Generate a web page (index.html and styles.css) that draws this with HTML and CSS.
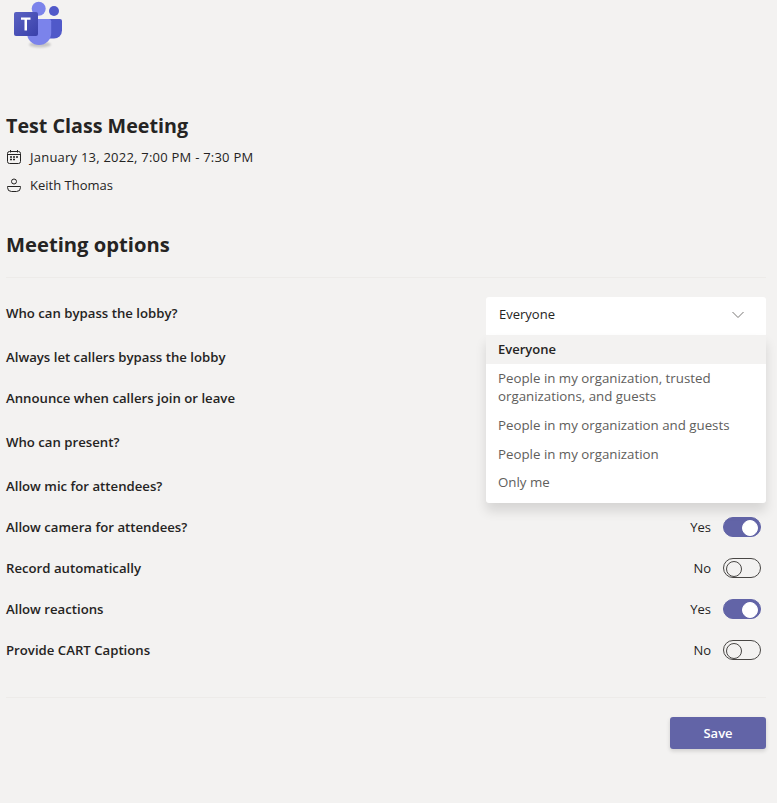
FILE: index.html
```html
<!DOCTYPE html>
<html lang="en">

<head>
    <meta charset="UTF-8">
    <meta name="viewport" content="width=device-width, initial-scale=1.0">
    <title>Meeting options</title>

    <link rel="stylesheet" href="styles.css">
</head>

<body>
    <header class="top">
        <svg class="logo" width="70" height="55" viewBox="0 0 70 55" aria-label="Microsoft Teams">
            <defs>
                <linearGradient id="tile" x1="0" y1="0" x2="1" y2="1">
                    <stop offset="0" stop-color="#5a62c3" />
                    <stop offset="1" stop-color="#3940ab" />
                </linearGradient>
                <filter id="soft" x="-30%" y="-30%" width="160%" height="160%">
                    <feGaussianBlur stdDeviation="1.2" />
                </filter>
            </defs>
            <ellipse cx="40" cy="44.500" rx="11" ry="3" fill="#000" opacity=".18" filter="url(#soft)" />
            <circle cx="54" cy="11" r="5" fill="#5059c9" />
            <path d="M49 19h11a2 2 0 0 1 2 2v9.500a8 8 0 0 1-8 8h-5z" fill="#5059c9" />
            <circle cx="38.700" cy="8.700" r="7" fill="#7b83eb" />
            <path d="M29 19h20a2.200 2.200 0 0 1 2.200 2.200v11.800a12 12 0 0 1-24.200 0V21a2 2 0 0 1 2-2z" fill="#7b83eb" />
            <rect x="14" y="12" width="24" height="24" rx="2" fill="url(#tile)" />
            <path d="M21 17.500h9.500v2.200h-3.500v10.800h-2.500V19.700H21z" fill="#fff" />
        </svg>
    </header>

    <main class="page">
        <section class="meeting">
            <h1 class="meeting-title">Test Class Meeting</h1>
            <p class="meeting-line meeting-date">
                <svg width="16" height="16" viewBox="0 0 16 16" fill="none" stroke="#252423">
                    <rect x="1.500" y="2.500" width="13" height="12" rx="2" />
                    <path d="M1.500 5.500h13M4.500 1v2.500M11.500 1v2.500" />
                    <path d="M4 8h2M7 8h2M10 8h2M4 10.500h2M7 10.500h2" stroke-width="1.300" />
                </svg>
                January 13, 2022, 7:00 PM - 7:30 PM
            </p>
            <p class="meeting-line">
                <svg width="16" height="16" viewBox="0 0 16 16" fill="none" stroke="#252423">
                    <circle cx="8" cy="4.500" r="2.500" />
                    <path d="M1.500 9.500h13v1a4 4 0 0 1-4 4h-5a4 4 0 0 1-4-4z" />
                </svg>
                Keith Thomas
            </p>
        </section>

        <h2 class="options-title">Meeting options</h2>

        <div class="options">
            <div class="row row-first">
                <span class="row-label">Who can bypass the lobby?</span>
                <div class="dropdown">
                    <div class="dropdown-value">
                        Everyone
                        <svg class="chevron" width="12" height="8" viewBox="0 0 12 8" fill="none" stroke="#797775">
                            <path d="M.5 1l5.500 5.500L11.500 1" />
                        </svg>
                    </div>
                    <ul class="dropdown-list">
                        <li class="selected">Everyone</li>
                        <li>People in my organization, trusted organizations, and guests</li>
                        <li>People in my organization and guests</li>
                        <li>People in my organization</li>
                        <li>Only me</li>
                    </ul>
                </div>
            </div>
            <div class="row"><span class="row-label">Always let callers bypass the lobby</span></div>
            <div class="row"><span class="row-label">Announce when callers join or leave</span></div>
            <div class="row row-tall"><span class="row-label">Who can present?</span></div>
            <div class="row"><span class="row-label">Allow mic for attendees?</span></div>
            <div class="row">
                <span class="row-label">Allow camera for attendees?</span>
                <span class="row-state">Yes</span>
                <span class="toggle on"></span>
            </div>
            <div class="row">
                <span class="row-label">Record automatically</span>
                <span class="row-state">No</span>
                <span class="toggle"></span>
            </div>
            <div class="row">
                <span class="row-label">Allow reactions</span>
                <span class="row-state">Yes</span>
                <span class="toggle on"></span>
            </div>
            <div class="row">
                <span class="row-label">Provide CART Captions</span>
                <span class="row-state">No</span>
                <span class="toggle"></span>
            </div>
        </div>

        <footer class="actions">
            <button class="save" type="button">Save</button>
        </footer>
    </main>
</body>

</html>
```

FILE: styles.css
```css
* {
    margin: 0;
    padding: 0;
    box-sizing: border-box;
}

body {
    background-color: #f3f2f1;
    color: #252423;
    font-family: "Open Sans", "Noto Sans", sans-serif;
    font-size: 13px;
    height: 803px;
    overflow: hidden;
}

.top {
    height: 112px;
}

.logo {
    display: block;
}

.page {
    padding: 0 11px 0 6px;
}

.meeting-title {
    font-size: 19.700px;
    font-weight: 700;
    line-height: 28px;
    margin-bottom: 3px;
}

.meeting-line {
    display: flex;
    align-items: center;
    gap: 8px;
    height: 28px;
}

.meeting-date {
    letter-spacing: 0.23px;
}

.options-title {
    font-size: 20.200px;
    font-weight: 700;
    line-height: 28px;
    margin-top: 31px;
    padding-bottom: 19px;
    border-bottom: 1px solid #edebe9;
}

.options {
    padding-top: 19px;
}

.row {
    display: flex;
    align-items: center;
    height: 41px;
}

.row-first {
    align-items: flex-start;
    height: 39px;
    position: relative;
}

.row-first .row-label {
    line-height: 32px;
}

.row-tall {
    height: 47px;
}

.row-label {
    font-weight: 600;
    flex: 1;
    font-size: 13.200px;
}

.row-state {
    margin-right: 12px;
}

.toggle {
    width: 38px;
    height: 20px;
    margin-right: 5px;
    border: 1px solid #484644;
    border-radius: 10px;
    padding: 2px;
    display: flex;
}

.toggle::after {
    content: '';
    width: 14px;
    height: 14px;
    border: 1px solid #484644;
    border-radius: 50%;
}

.toggle.on {
    background: #6264a7;
    border-color: #6264a7;
    justify-content: flex-end;
}

.toggle.on::after {
    background: #fff;
    border-color: #fff;
}

.dropdown {
    width: 280px;
    position: relative;
}

.dropdown-value {
    display: flex;
    align-items: center;
    justify-content: space-between;
    height: 38px;
    padding: 0 22px 5px 13px;
    background: #fff;
    border-radius: 3px 3px 0 0;
}

.chevron {
    margin-top: 2px;
}

.dropdown-list {
    position: absolute;
    top: 38px;
    left: 0;
    right: 0;
    z-index: 10;
    list-style: none;
    background: #fff;
    color: #605e5c;
    font-size: 13.300px;
    border-radius: 0 0 3px 3px;
    box-shadow: 0 8px 12px rgba(0, 0, 0, 0.12);
    padding-bottom: 5px;
}

.dropdown-list li {
    padding: 5px 12px 6px;
    line-height: 18px;
}

.dropdown-list li:last-child {
    padding: 4px 12px 7px;
}

.dropdown-list li.selected {
    background: #f3f2f1;
    color: #252423;
    font-size: 13px;
    font-weight: 600;
}

.actions {
    margin-top: 27px;
    padding-top: 19px;
    border-top: 1px solid #edebe9;
    display: flex;
    justify-content: flex-end;
}

.save {
    width: 96px;
    height: 32px;
    background: #6264a7;
    color: #fff;
    border: none;
    border-radius: 3px;
    font: 600 13px "Open Sans", "Noto Sans", sans-serif;
    box-shadow: 0 2px 4px rgba(0, 0, 0, 0.15);
}
```
